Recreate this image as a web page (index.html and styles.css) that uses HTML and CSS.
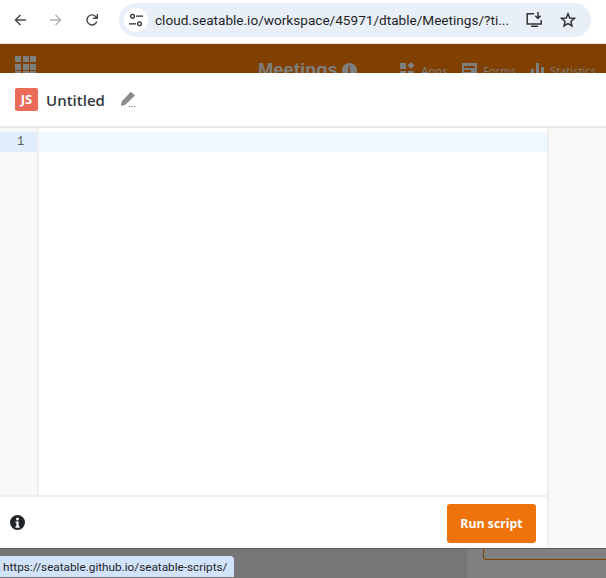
FILE: index.html
```html
<!DOCTYPE html>
<html lang="en">
<head>
<meta charset="utf-8">
<title>Untitled</title>
<link rel="stylesheet" href="styles.css">
</head>
<body>
<div class="toolbar">
  <svg class="nav" width="12" height="12" viewBox="0 0 12 12"><path d="M12 6H1.500M6.400 1 1.400 6l5 5" fill="none" stroke="#474747" stroke-width="1.400"/></svg>
  <svg class="nav" width="12" height="12" viewBox="0 0 12 12"><path d="M0 6h10.500M5.600 1l5 5-5 5" fill="none" stroke="#b0b0b0" stroke-width="1.400"/></svg>
  <svg class="nav" width="12" height="12" viewBox="0 0 12 12"><path d="M10.800 7.400A5 5 0 1 1 9.600 2.400L11.300 4M11.300 0v4.300H7" fill="none" stroke="#474747" stroke-width="1.400"/></svg>
  <div class="omnibox">
    <div class="site-chip">
      <svg width="14" height="14" viewBox="0 0 14 14"><g fill="none" stroke="#2b2b2b" stroke-width="1.300"><circle cx="3.500" cy="3.200" r="1.900"/><circle cx="10.500" cy="10.800" r="1.900"/><path d="M7 3.200h7M0 10.800h7"/></g></svg>
    </div>
    <span class="url">cloud.seatable.io/workspace/45971/dtable/Meetings/?ti...</span>
    <svg class="omni-icon" width="17" height="16" viewBox="0 0 17 16"><path d="M8 1.700H1.200v10.300h14V8" fill="none" stroke="#333" stroke-width="1.500"/><path d="M5 13.500h7v1.500H5z" fill="#333"/><path d="M12 0v5.500M9.300 3.800 12 6.500l2.700-2.700" fill="none" stroke="#333" stroke-width="1.500"/></svg>
    <svg class="omni-icon star" width="16" height="16" viewBox="0 0 16 16"><path d="m8 1.800 1.800 4.200 4.600.4-3.500 3 1.100 4.500L8 11.500l-4 2.400 1.100-4.500-3.500-3 4.600-.4z" fill="none" stroke="#333" stroke-width="1.500"/></svg>
  </div>
</div>
<div class="app-header">
  <div class="apps-grid"><i></i><i></i><i></i><i></i><i></i><i></i><i></i><i></i><i></i></div>
  <div class="base-title">
    <span class="base-name">Meetings</span>
    <span class="base-info">i</span>
  </div>
  <div class="app-links">
    <span class="app-link"><svg width="15" height="15" viewBox="0 0 15 15"><path d="M0 1h6v6H0zM0 9h6v6H0zM8 9h6v6H8zM11 0l3.500 3.500L11 7 7.500 3.500z" fill="#7f7f7f"/></svg>Apps</span>
    <span class="app-link"><svg width="15" height="15" viewBox="0 0 15 15"><path fill-rule="evenodd" d="M0 1h15v14H0zM2 4v2h11V4zM2 8v2h7V8z" fill="#7f7f7f"/></svg>Forms</span>
    <span class="app-link"><svg width="13" height="15" viewBox="0 0 13 15"><path d="M0 7h3v8H0zM5 1h3v14H5zM10 5h3v10h-3z" fill="#7f7f7f"/></svg>Statistics</span>
  </div>
</div>
<main class="dialog">
  <header class="dialog-head">
    <span class="js-badge">JS</span>
    <span class="script-name">Untitled</span>
    <svg class="edit-icon" width="16" height="16" viewBox="0 0 16 16"><path d="M10.800.8 15 4.600 5.400 13.800 0.800 15l1.100-4.700z" fill="#8c8c8c"/><path d="M9 15h1.500v1H9zM11.500 15H13v1h-1.500zM14 15h1.500v1H14z" fill="#8c8c8c"/></svg>
  </header>
  <div class="dialog-body">
    <section class="panel">
      <div class="editor">
        <div class="gutter"><div class="gutter-line">1</div></div>
        <div class="code"><div class="active-line"></div></div>
      </div>
      <footer class="panel-foot">
        <svg width="15" height="15" viewBox="0 0 16 16"><circle cx="8" cy="8" r="8" fill="#212529"/><circle cx="8" cy="4.200" r="1.600" fill="#fff"/><path d="M5.800 6.800h3.400v5.200h1v1.500H5.800V12h1V8.300h-1z" fill="#fff"/></svg>
        <button class="run-btn" type="button">Run script</button>
      </footer>
    </section>
    <aside class="side"></aside>
  </div>
</main>
<div class="backdrop">
  <div class="status-url">https://seatable.github.io/seatable-scripts/</div>
  <div class="behind-box"></div>
</div>
</body>
</html>
```
FILE: styles.css
```css
* { box-sizing: border-box; }
html, body { margin: 0; height: 578px; overflow: hidden; }
body {
  font-family: "Liberation Sans", Arial, sans-serif;
  background: #fff;
  display: flex;
  flex-direction: column;
}

.toolbar {
  height: 44px;
  flex: none;
  display: flex;
  align-items: center;
  padding: 0 15px 4px 14px;
  background: #fff;
  border-bottom: 1px solid #e6e1dc;
}
.nav { flex: none; margin-right: 24px; }
.nav:nth-child(3) { margin-right: 21px; }
.omnibox {
  flex: 1;
  height: 34px;
  display: flex;
  align-items: center;
  background: #e9eff8;
  border-radius: 17px;
  padding: 0 15px 0 5px;
}
.site-chip {
  width: 24px;
  height: 24px;
  border-radius: 50%;
  background: #fff;
  display: flex;
  align-items: center;
  justify-content: center;
  flex: none;
}
.url {
  flex: 1;
  margin-left: 7px;
  font-family: "Roboto", sans-serif;
  font-size: 13.6px;
  color: #1f1f1f;
  white-space: nowrap;
  overflow: hidden;
}
.omni-icon { flex: none; margin-left: 16px; }
.star { margin-left: 17px; }

.app-header {
  height: 29px;
  flex: none;
  overflow: hidden;
  background: #804000;
  display: flex;
  align-items: flex-start;
  padding: 12px 10px 0 15px;
  color: #7f7f7f;
}
.apps-grid {
  display: grid;
  grid-template-columns: repeat(3, 6px);
  grid-auto-rows: 6px;
  gap: 1.500px;
  width: 22px;
  flex: none;
}
.apps-grid i { background: #7f7f7f; }
.base-title {
  display: flex;
  align-items: center;
  gap: 4px;
  margin-left: 221px;
  margin-top: 3px;
  flex: none;
}
.base-name { font-size: 18.4px; font-weight: 700; line-height: 22px; }
.base-info {
  width: 15px;
  height: 15px;
  border-radius: 50%;
  background: #7f7f7f;
  color: #804000;
  font-size: 11px;
  font-weight: 700;
  text-align: center;
  line-height: 15px;
}
.app-links { display: flex; gap: 15px; margin-left: auto; margin-top: 6px; }
.app-link {
  display: flex;
  align-items: flex-start;
  gap: 6px;
  font-size: 11.200px;
  line-height: 15px;
  padding-top: 1px;
  font-family: "Open Sans", sans-serif;
}
.app-link svg { flex: none; margin-top: -1px; }

.dialog {
  flex: 1;
  min-height: 0;
  display: flex;
  flex-direction: column;
  background: #fff;
}
.dialog-head {
  height: 55px;
  flex: none;
  display: flex;
  align-items: center;
  padding: 0 0 1px 15px;
  border-bottom: 2px solid #e6e8ea;
}
.js-badge {
  width: 23px;
  height: 23px;
  border-radius: 2px;
  background: #ec6a58;
  color: #fff;
  font-family: "Open Sans", sans-serif;
  font-size: 13px;
  font-weight: 700;
  text-align: center;
  line-height: 23px;
}
.script-name {
  margin: 2px 0 0 8px;
  font-family: "Open Sans", sans-serif;
  font-size: 15px;
  font-weight: 600;
  color: #333a41;
}
.edit-icon { margin-left: 15px; }

.dialog-body { flex: 1; min-height: 0; display: flex; }
.panel {
  width: 549px;
  flex: none;
  display: flex;
  flex-direction: column;
  border-right: 2px solid #efefef;
}
.editor { flex: 1; min-height: 0; display: flex; }
.gutter {
  width: 39px;
  flex: none;
  padding-top: 4px;
  background: #f8f8f8;
  border-right: 2px solid #efefef;
}
.gutter-line {
  height: 20px;
  background: #e0eefc;
  font-family: "Liberation Mono", monospace;
  font-size: 12px;
  line-height: 20px;
  color: #5c5c5c;
  padding-left: 17px;
}
.code { flex: 1; padding-top: 4px; }
.active-line { height: 20px; background: #f0f8ff; }
.panel-foot {
  height: 53px;
  flex: none;
  display: flex;
  align-items: center;
  justify-content: space-between;
  padding: 0 11px 0 10px;
  border-top: 2px solid #efefef;
}
.run-btn {
  width: 89px;
  height: 39px;
  margin-top: 1px;
  border: 0;
  border-radius: 3px;
  background: #ee730a;
  color: #fff;
  font-family: "Open Sans", sans-serif;
  font-size: 12.3px;
  font-weight: 700;
  padding: 0;
}
.side { flex: 1; background: #f8f8f7; }

.backdrop {
  height: 30px;
  flex: none;
  position: relative;
  background: linear-gradient(to right, #767676 467px, #808080 467px);
  border-top: 1px solid #5f5f5f;
  overflow: hidden;
}
.status-url {
  position: absolute;
  left: 0;
  top: 7px;
  width: 234px;
  height: 21px;
  padding: 3px 0 0 3px;
  background: #d2e3fc;
  border-top-right-radius: 4px;
  font-family: "Roboto", sans-serif;
  font-size: 11.75px;
  line-height: 16px;
  color: #1f1f1f;
  white-space: nowrap;
}
.behind-box {
  position: absolute;
  left: 483px;
  top: -20px;
  width: 140px;
  height: 31px;
  border: 1px solid #804000;
  border-radius: 3px;
}
```
